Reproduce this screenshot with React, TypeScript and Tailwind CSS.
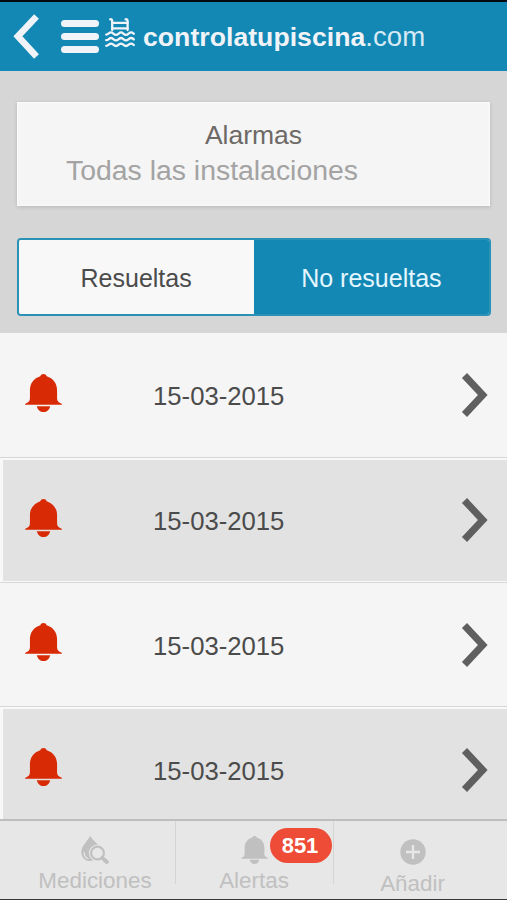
import { useState } from 'react';

interface Alarma {
    id: number;
    fecha: string;
}

const alarmas: Alarma[] = [
    { id: 1, fecha: '15-03-2015' },
    { id: 2, fecha: '15-03-2015' },
    { id: 3, fecha: '15-03-2015' },
    { id: 4, fecha: '15-03-2015' },
];

const Bell = ({ className }: { className: string }) => (
    <svg viewBox="0 0 36 38" preserveAspectRatio="none" fill="currentColor" className={className}>
        <path d="M18 0C16.4 0 15.4 .8 14.9 2.2C8.6 4.2 4.8 9.5 4.8 16V24.5C4.8 27.2 3.2 28.6 .3 29.8C-.1 30 0 30.8 .6 30.8H35.4C36 30.8 36.1 30 35.7 29.8C32.8 28.6 31.2 27.2 31.2 24.5V16C31.2 9.5 27.4 4.2 21.1 2.2C20.6 .8 19.6 0 18 0Z" />
        <path d="M11.5 32.2H24.5C23.6 35.8 21.3 38 18 38S12.4 35.8 11.5 32.2Z" />
    </svg>
);

const PoolLogo = () => (
    <svg viewBox="0 0 30 30" fill="none" stroke="currentColor" strokeWidth="2.3" strokeLinecap="round" className="h-[30px] w-[30px]">
        <path d="M5.2 1.3C6.5 1.1 7.2 1.8 7.2 3V12M20.6 1.3C21.9 1.1 22.6 1.8 22.6 3V12" />
        <path d="M7.2 4.8H22.6M7.2 10.4H22.6" />
        <path d="M1.2 16.6C3.5 16.6 4 14.4 6 14.4S8.7 16.8 11 16.8S14 14.4 16 14.4S18.7 16.8 21 16.8S24 14.4 26 14.4S28 15.4 28.8 15.8" />
        <path d="M1.2 22.2C3.5 22.2 4 20 6 20S8.7 22.4 11 22.4S14 20 16 20S18.7 22.4 21 22.4S24 20 26 20S28 21 28.8 21.4" />
        <path d="M1.2 27.8C3.5 27.8 4 25.6 6 25.6S8.7 28 11 28S14 25.6 16 25.6S18.7 28 21 28S24 25.6 26 25.6S28 26.6 28.8 27" />
    </svg>
);

const Header = () => (
    <header className="flex h-[70.5px] items-start border-t-2 border-[#020a0f] bg-[#1488b4] text-[#f0f4f8]">
        <button aria-label="Volver" className="mt-3 ml-[13px]">
            <svg viewBox="0 0 27 45" fill="none" stroke="currentColor" strokeWidth="6.6" className="h-[45px] w-[27px]">
                <path d="M23.5 2.5L4.9 22.3L23.5 42.5" />
            </svg>
        </button>
        <button aria-label="Menú" className="mt-[18px] ml-[21px] flex w-[38px] flex-col gap-[6px]">
            <span className="h-[7px] rounded-full bg-current"></span>
            <span className="h-[7px] rounded-full bg-current"></span>
            <span className="h-[7px] rounded-full bg-current"></span>
        </button>
        <div className="mt-[15.5px] ml-[6px]">
            <PoolLogo />
        </div>
        <p className="mt-5 ml-2 text-[26.6px] leading-[30px] whitespace-nowrap">
            <span className="font-bold tracking-[0.04px]">controlatupiscina</span>
            <span className="text-[27.6px] text-[#d5eaf4]">.com</span>
        </p>
    </header>
);

const Row = ({ alarma }: { alarma: Alarma }) => (
    <li className="flex h-[124.8px] shrink-0 flex-col border-b border-[#d7d7d7] bg-[#f8f8f8] pb-px pl-[3px] text-[#4b4b4b] odd:bg-[#f5f5f5] even:pt-[2px]">
        <div className={alarma.id % 2 === 0 ? 'flex flex-1 items-center bg-[#e2e2e2]' : 'flex flex-1 items-center pt-[2px]'}>
            <Bell className="mb-[5px] ml-[22px] h-[38px] w-[37px] text-[#d82b05]" />
            <span className="ml-[91px] flex-1 pt-[1.6px] text-[25.7px] leading-[30px]">{alarma.fecha}</span>
            <svg viewBox="0 0 28 46" fill="none" stroke="#5f5f5f" strokeWidth="7" className="mr-[19px] h-[46px] w-7">
                <path d="M4.5 3.5L22.8 23L4.5 42.5" />
            </svg>
        </div>
    </li>
);

const Footer = () => (
    <footer className="flex h-[81px] shrink-0 border-t-2 border-b border-t-[#bebebe] border-b-[#39393b] bg-[#e7e7e7] text-[22.4px] leading-[26px] text-[#c0c0c0]">
        <div className="flex w-[176px] flex-col items-center pl-[14px]">
            <svg viewBox="0 0 28 28" fill="none" className="mt-[15px] h-7 w-7">
                <path d="M9 0C6.5 5 .3 10 .3 16.2C.3 21.3 4 25 9 25C11.5 25 14 24 16 22L17.5 9.5C15 6.5 12 4 9 0Z" fill="currentColor" />
                <path d="M3 16C3 19.5 5 22 7.5 22.7" stroke="#e7e7e7" strokeWidth="1.1" />
                <circle cx="16.5" cy="17" r="8.6" fill="#e7e7e7" />
                <circle cx="16.5" cy="17" r="6.4" stroke="currentColor" strokeWidth="2.2" />
                <path d="M21.3 21.8L25.8 26" stroke="currentColor" strokeWidth="3.8" strokeLinecap="round" />
            </svg>
            <span className="mt-[4px]">Mediciones</span>
        </div>
        <div className="relative flex w-[158px] flex-col items-center">
            <div className="absolute top-0 left-[-1px] h-[63px] w-px bg-[#d4d4d4]"></div>
            <div className="absolute top-0 right-0 h-[63px] w-px bg-[#d4d4d4]"></div>
            <Bell className="mt-[15px] mr-[2px] h-7 w-[27px]" />
            <span className="mt-[4px] mr-[2px]">Alertas</span>
            <span className="absolute top-[7px] left-[94px] flex h-[35px] w-[62px] items-center justify-center rounded-full bg-[#ee4c36] pr-[2px] text-[22px] font-bold text-white">851</span>
        </div>
        <div className="flex flex-1 flex-col items-center pr-[16px]">
            <svg viewBox="0 0 26 26" className="mt-[18px] h-[26px] w-[26px]">
                <circle cx="13" cy="13" r="12.7" fill="currentColor" />
                <path d="M13 6V20M6 13H20" stroke="#e7e7e7" strokeWidth="2.4" />
            </svg>
            <span className="mt-[6px]">Añadir</span>
        </div>
    </footer>
);

const App = () => {
    const [resueltas, setResueltas] = useState(false);

    const active = 'bg-[#1488b4] text-[#e4f6ff]';
    const inactive = 'bg-[#f8f8f8] text-[#4b4b4b]';

    return (
        <div className="flex h-[900px] w-[507px] flex-col overflow-hidden bg-[#d6d6d6] font-['Liberation_Sans',Arial,sans-serif]">
            <Header />
            <main className="flex min-h-0 flex-1 flex-col">
                <section className="mx-[17px] mt-[31.5px] h-[104px] shrink-0 border border-[#fafafa] bg-[#f5f5f5] pt-[16px] text-center shadow-[0_1px_4px_rgba(0,0,0,0.15)]">
                    <h1 className="text-[26.5px] leading-[32px] text-[#6c6966]">Alarmas</h1>
                    <p className="pr-[83px] text-[28.4px] leading-[38px] whitespace-nowrap text-[#a3a3a3]">Todas las instalaciones</p>
                </section>
                <div className="mr-4 ml-[16.5px] mt-[32px] flex h-[78px] shrink-0 overflow-hidden rounded-[4px] border-2 border-[#2a91b7] text-[25px]">
                    <button onClick={() => setResueltas(true)} className={`w-1/2 pt-[3px] ${resueltas ? active : inactive}`}>
                        Resueltas
                    </button>
                    <button onClick={() => setResueltas(false)} className={`w-1/2 pt-[3px] ${resueltas ? inactive : active}`}>
                        No resueltas
                    </button>
                </div>
                <ul className="mt-[17px] flex min-h-0 flex-1 flex-col overflow-hidden">
                    {alarmas.map((alarma) => (
                        <Row key={alarma.id} alarma={alarma} />
                    ))}
                </ul>
            </main>
            <Footer />
        </div>
    );
};

export default App;
